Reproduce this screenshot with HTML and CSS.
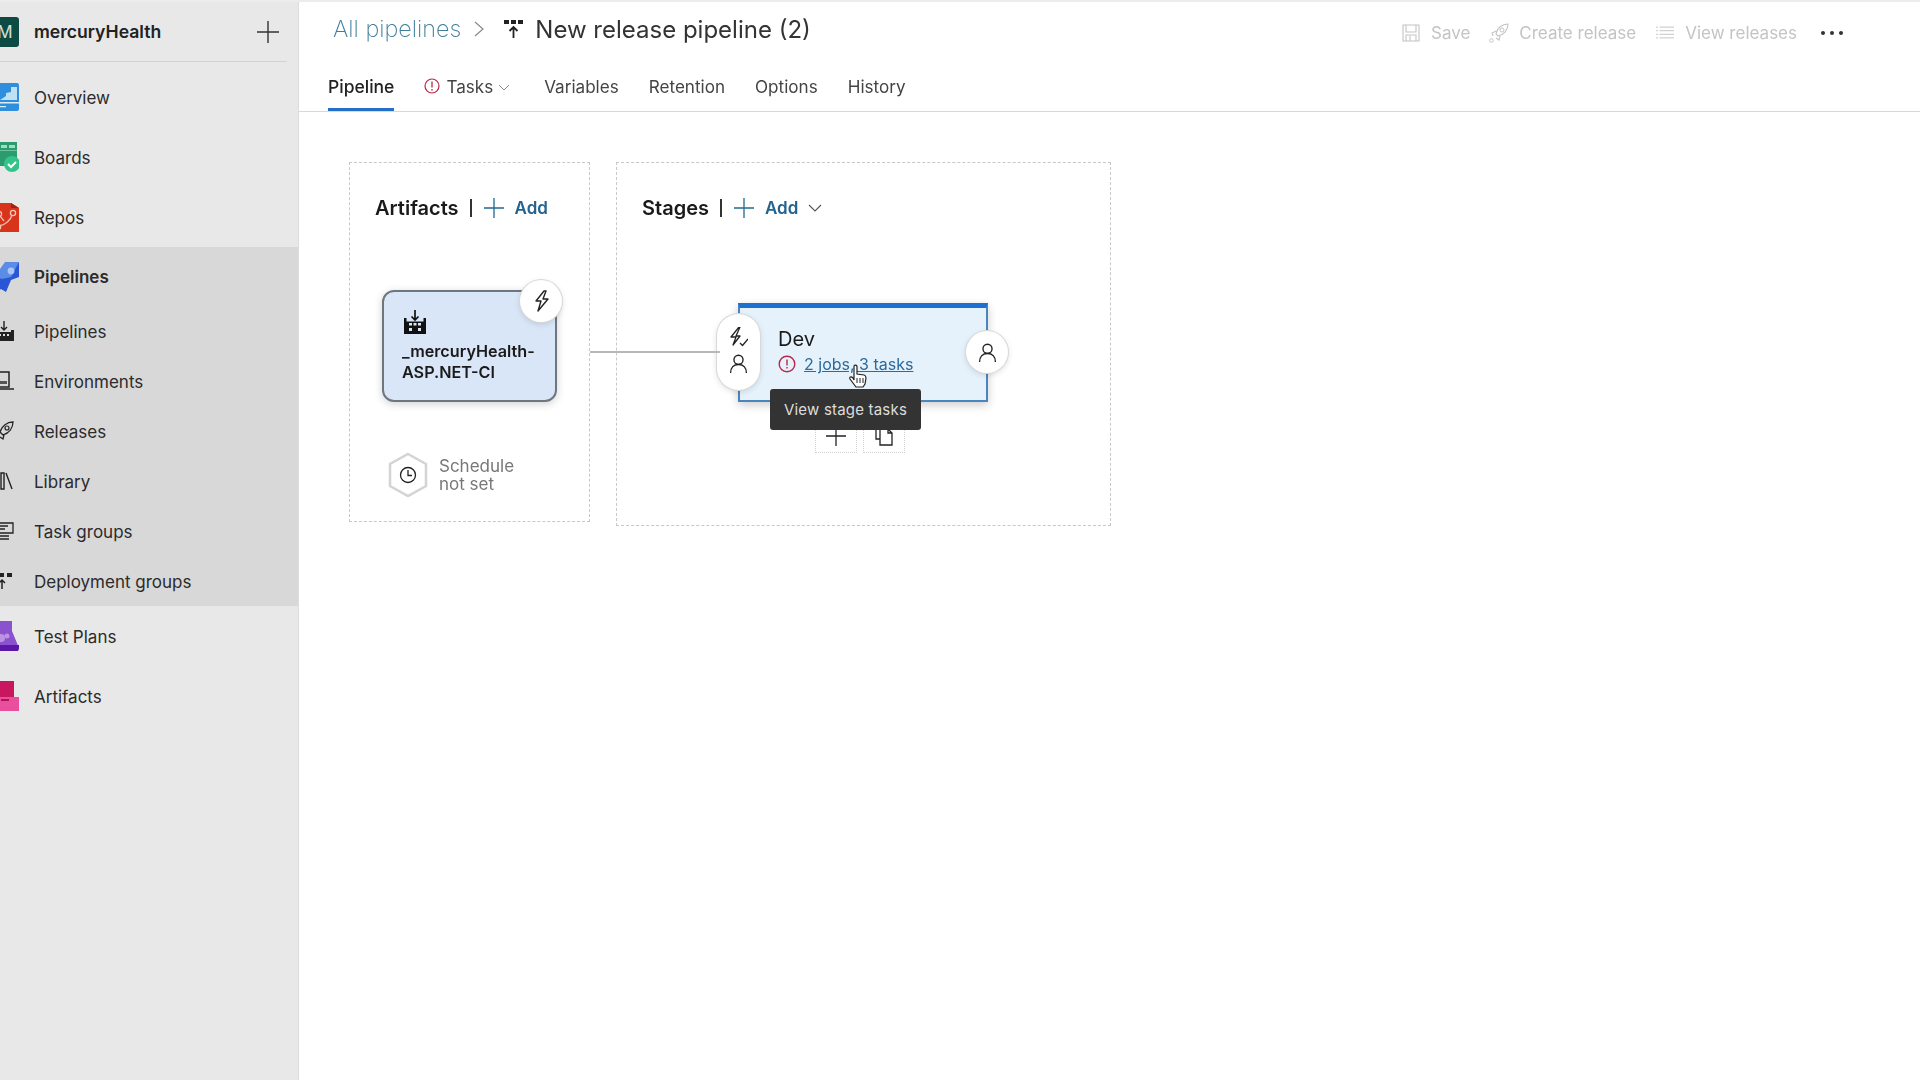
FILE: index.html
```html
<!DOCTYPE html>
<html lang="en">
<head>
<meta charset="utf-8">
<title>New release pipeline (2)</title>
<link rel="stylesheet" href="styles.css">
</head>
<body>
<div class="app">
  <aside class="sidebar">
    <div class="org">
      <span class="org-badge">M</span>
      <span class="org-name">mercuryHealth</span>
      <svg class="org-plus" viewBox="0 0 22 22"><path d="M11 0v22M0 11h22" stroke="#333" stroke-width="1.4" fill="none"/></svg>
    </div>
    <nav class="nav">
      <a class="nav-item">
        <svg class="hub-icon" viewBox="0 0 28 28"><rect width="28" height="28" rx="2" fill="#2f8fdc"/><path d="M9 17l6-4v-3l5-1V4h6v13z" fill="#bfe0f5"/><path d="M0 19h28v1.5H0zM0 23h15v1.2H0z" fill="#d9eefb"/></svg>
        <span>Overview</span>
      </a>
      <a class="nav-item">
        <svg class="hub-icon" viewBox="0 0 28 30"><path d="M0 0h26v24H0z" fill="#2c9c70"/><path d="M0 3h8v3H0zM10 3h6v3h-6zM18 3h6v3h-6z" fill="#a4dcc0"/><path d="M0 8h26v1H0z" fill="#6cc49b"/><circle cx="21" cy="22" r="8" fill="#34c48b"/><path d="M17 22l3 3 5-5" stroke="#fff" stroke-width="2" fill="none"/></svg>
        <span>Boards</span>
      </a>
      <a class="nav-item">
        <svg class="hub-icon" viewBox="0 0 28 30"><path d="M0 1h20l8 5v24H0z" fill="#d8341c"/><path d="M20 1l8 5h-8z" fill="#9f2411"/><path d="M8 24c6-1 12-6 13-11M9 14l4 5" stroke="#f3b7a8" stroke-width="1.4" fill="none"/><circle cx="22" cy="11" r="2.6" fill="none" stroke="#f6c8bc" stroke-width="1.3"/><circle cx="8" cy="12" r="2.6" fill="none" stroke="#f6c8bc" stroke-width="1.3"/><circle cx="7" cy="25" r="2.6" fill="none" stroke="#f6c8bc" stroke-width="1.3"/></svg>
        <span>Repos</span>
      </a>
      <div class="nav-group">
        <a class="nav-item nav-item-active">
          <svg class="hub-icon" viewBox="0 0 28 30"><path d="M28 0v15l-8 3-5 12-5-3-4 3-6-8 10-14z" fill="#2a56d6"/><path d="M28 0H14L4 14l7 3 9-2z" fill="#5b8de8"/><circle cx="20" cy="9" r="3.4" fill="#a9c6f5"/></svg>
          <span>Pipelines</span>
        </a>
        <a class="nav-sub">
          <svg class="sub-icon" viewBox="0 0 20 20"><path d="M10 0v9M7 6l3 3 3-3" stroke="#222" stroke-width="1.4" fill="none"/><path d="M0 9h3v2h14V9h3v11H0z" fill="#222"/><path d="M5 13h2v2H5zM9 13h2v2H9zM13 13h2v2h-2z" fill="#ddd"/></svg>
          <span>Pipelines</span>
        </a>
        <a class="nav-sub">
          <svg class="sub-icon" viewBox="0 0 20 20"><path d="M3 1h12v15H3zM0 18h20" stroke="#222" stroke-width="1.5" fill="none"/><path d="M5 10h8v3H5z" fill="#555"/></svg>
          <span>Environments</span>
        </a>
        <a class="nav-sub">
          <svg class="sub-icon" viewBox="0 0 20 20"><path d="M19 1c-6 0-11 4-13 10l3 3c6-2 10-7 10-13zM6 9l-4 2 1 3M10 14l-1 4-3-2" stroke="#222" stroke-width="1.3" fill="none"/><circle cx="13" cy="7" r="2" fill="none" stroke="#222" stroke-width="1.2"/></svg>
          <span>Releases</span>
        </a>
        <a class="nav-sub">
          <svg class="sub-icon" viewBox="0 0 20 20"><path d="M2 2h3v16H2zM7 2h3v16H7zM12 2l6 16" stroke="#222" stroke-width="1.4" fill="none"/></svg>
          <span>Library</span>
        </a>
        <a class="nav-sub">
          <svg class="sub-icon" viewBox="0 0 20 20"><path d="M3 2h16v10H3zM1 15h14M1 18h14M6 5h8M6 8h5" stroke="#222" stroke-width="1.3" fill="none"/></svg>
          <span>Task groups</span>
        </a>
        <a class="nav-sub">
          <svg class="sub-icon" viewBox="0 0 20 20"><path d="M0 2h4v4H0zM6 2h4v4H6zM13 2h5v4h-5z" fill="#222"/><path d="M8 18V9M5 12l3-3 3 3" stroke="#222" stroke-width="1.5" fill="none"/></svg>
          <span>Deployment groups</span>
        </a>
      </div>
      <a class="nav-item">
        <svg class="hub-icon" viewBox="0 0 28 30"><path d="M6 0h15v10l7 17-1 3H0v-20z" fill="#8a52cf"/><path d="M0 24h28v3l-1 3H0z" fill="#5a17a8"/><circle cx="10" cy="17" r="4" fill="#bb93e3"/><circle cx="16" cy="15" r="2.5" fill="#bb93e3"/></svg>
        <span>Test Plans</span>
      </a>
      <a class="nav-item">
        <svg class="hub-icon" viewBox="0 0 28 30"><path d="M2 0h21v17H2z" fill="#c8175f"/><path d="M0 16h28v14H0z" fill="#ea4f9d"/><path d="M10 18h8v2h-8z" fill="#a81456"/></svg>
        <span>Artifacts</span>
      </a>
    </nav>
  </aside>

  <main class="main">
    <header class="header">
      <div class="title-row">
        <a class="crumb">All pipelines</a>
        <svg class="crumb-sep" viewBox="0 0 10 16"><path d="M1 1l8 7-8 7" stroke="#8a8a8a" stroke-width="1.2" fill="none"/></svg>
        <svg class="title-icon" viewBox="0 0 20 20"><path d="M0 1h5v4H0zM7 1h5v4H7zM14 1h5v4h-5z" fill="#222"/><path d="M9.500 19V8M5.500 12l4-4 4 4" stroke="#222" stroke-width="1.8" fill="none"/></svg>
        <h1 class="title">New release pipeline (2)</h1>
        <div class="toolbar">
          <button class="tool tool-save">
            <svg class="tool-icon" viewBox="0 0 18 18"><path d="M1 1h16v16H1zM4 1v7h10V1M4 17v-6h10v6M8 12v5" stroke="#c4c4c4" stroke-width="1.1" fill="none"/></svg>Save
          </button>
          <button class="tool tool-create">
            <svg class="tool-icon tool-icon-wide" viewBox="0 0 20 20"><path d="M19 1c-6 0-11 4-12 10l2 2c6-1 10-6 10-12zM7 8l-4 2 1 3M11 13l-1 4-3-2" stroke="#c4c4c4" stroke-width="1.1" fill="none"/><circle cx="13" cy="7" r="2" fill="none" stroke="#c4c4c4"/><circle cx="2.500" cy="17.500" r="1.800" fill="none" stroke="#c4c4c4"/></svg>Create release
          </button>
          <button class="tool tool-view">
            <svg class="tool-icon" viewBox="0 0 20 14"><path d="M4 1h16M4 5h16M4 9h16M4 13h16M0 1h2M0 5h2M0 9h2M0 13h2" stroke="#c4c4c4" stroke-width="1.100" fill="none"/></svg>View releases
          </button>
          <span class="dots"><i></i><i></i><i></i></span>
        </div>
      </div>
      <div class="tabs">
        <a class="tab tab-active">Pipeline</a>
        <a class="tab tab-tasks">
          <svg class="tab-alert" viewBox="0 0 16 16"><circle cx="8" cy="8" r="7" fill="none" stroke="#b8274a" stroke-width="1.200"/><path d="M8 3.500v6M8 11v1.500" stroke="#b8274a" stroke-width="1.300"/></svg>
          Tasks
          <svg class="tab-chev" viewBox="0 0 12 7"><path d="M1 1l5 5 5-5" stroke="#888" stroke-width="1" fill="none"/></svg>
        </a>
        <a class="tab">Variables</a>
        <a class="tab">Retention</a>
        <a class="tab">Options</a>
        <a class="tab">History</a>
      </div>
    </header>

    <section class="canvas">
      <div class="panel panel-artifacts">
        <div class="panel-head">
          <span class="panel-title">Artifacts</span>
          <span class="panel-sep"></span>
          <svg class="add-plus" viewBox="0 0 20 20"><path d="M10 0v20M0 10h20" stroke="#1f6a8f" stroke-width="1.300" fill="none"/></svg>
          <span class="add-text">Add</span>
        </div>
        <div class="artifact-card">
          <svg class="artifact-icon" viewBox="0 0 22 24"><path d="M11 0v10M7.500 6.500L11 10l3.500-3.500" stroke="#111" stroke-width="1.700" fill="none"/><path d="M0 8h2.500v3.500h17V8H22v16H0z" fill="#111"/><path d="M5 13h3v2.500H5zM9.500 13h3v2.500h-3zM14 13h3v2.500h-3zM5 18h3v3H5zM14 18h3v3h-3z" fill="#dbe7f6"/></svg>
          <div class="artifact-name">_mercuryHealth-<br>ASP.NET-CI</div>
          <span class="round-badge artifact-trigger">
            <svg class="bolt" viewBox="0 0 18 22"><path d="M12 1L4 11h5L6 21l10-12h-5l3-8z" fill="none" stroke="#222" stroke-width="1.400" stroke-linejoin="round"/></svg>
          </span>
        </div>
        <div class="schedule">
          <svg class="hex" viewBox="0 0 42 46"><path d="M21 2l18 10v22L21 44 3 34V12z" fill="#fff" stroke="#d4d4d4" stroke-width="2.500"/><circle cx="21" cy="23" r="7.500" fill="none" stroke="#222" stroke-width="1.300"/><path d="M21 18v5.500h4" stroke="#222" stroke-width="1.300" fill="none"/></svg>
          <span class="schedule-text">Schedule<br>not set</span>
        </div>
      </div>

      <div class="panel panel-stages">
        <div class="panel-head">
          <span class="panel-title">Stages</span>
          <span class="panel-sep"></span>
          <svg class="add-plus" viewBox="0 0 20 20"><path d="M10 0v20M0 10h20" stroke="#1f6a8f" stroke-width="1.300" fill="none"/></svg>
          <span class="add-text">Add</span>
          <svg class="add-chev" viewBox="0 0 14 8"><path d="M1 1l6 6 6-6" stroke="#555" stroke-width="1.100" fill="none"/></svg>
        </div>
        <div class="stage-card">
          <div class="stage-name">Dev</div>
          <div class="stage-meta">
            <svg class="stage-alert" viewBox="0 0 18 18"><circle cx="9" cy="9" r="7.800" fill="none" stroke="#b8274a" stroke-width="1.400"/><path d="M9 4.500v6M9 12v1.500" stroke="#b8274a" stroke-width="1.400"/></svg>
            <a class="stage-link">2 jobs, 3 tasks</a>
          </div>
          <span class="stage-pill">
            <svg class="pill-bolt" viewBox="0 0 18 20"><path d="M9 0L1 10h5l-3 8 7-9H6l4-9zM10 16l2.500 2.500L18 12" fill="none" stroke="#222" stroke-width="1.300" stroke-linejoin="round"/></svg>
            <svg class="person" viewBox="0 0 18 18"><circle cx="9" cy="5.500" r="4.300" fill="none" stroke="#222" stroke-width="1.300"/><path d="M1.500 18c0-5 3-8 7.500-8s7.500 3 7.500 8" fill="none" stroke="#222" stroke-width="1.300"/></svg>
          </span>
          <span class="round-badge stage-post">
            <svg class="person" viewBox="0 0 18 18"><circle cx="9" cy="5.500" r="4.300" fill="none" stroke="#222" stroke-width="1.300"/><path d="M1.500 18c0-5 3-8 7.500-8s7.500 3 7.500 8" fill="none" stroke="#222" stroke-width="1.300"/></svg>
          </span>
          <svg class="hand" viewBox="0 0 18 24"><path d="M5 2c1-1.500 3-1 3 1v7l7 1c2 .5 2 2 2 3l-1 6-2 3H7l-6-8c-1-2 1-3 3-1l1 2z" fill="#fff" stroke="#222" stroke-width="1.200"/><path d="M8 14v5M11 14v5M14 14v5" stroke="#222" stroke-width="1"/></svg>
          <div class="tooltip">View stage tasks</div>
        </div>
        <span class="mini-btn mini-add">
          <svg class="mini-plus" viewBox="0 0 20 20"><path d="M10 0v20M0 10h20" stroke="#222" stroke-width="1.300" fill="none"/></svg>
        </span>
        <span class="mini-btn mini-copy">
          <svg class="mini-doc" viewBox="0 0 18 20"><path d="M1 0v13h4M5 3h8l4 4v12H5zM13 3v4h4" stroke="#222" stroke-width="1.300" fill="none"/></svg>
        </span>
      </div>
      <span class="connector"></span>
    </section>
  </main>
</div>
</body>
</html>
```
FILE: styles.css
```css
* { box-sizing: border-box; }
html, body { margin: 0; height: 100%; overflow: hidden; }
body { font-family: Inter, "Liberation Sans", sans-serif; color: #222; background: #fff; }
a { color: inherit; text-decoration: none; }
svg { display: block; flex: none; }

.app { display: flex; height: 1080px; width: 1920px; border-top: 2px solid #ececec; filter: blur(.35px); }

.sidebar { width: 299px; flex: none; background: #e8e8e8; border-right: 1px solid #dcdcdc; overflow: hidden; }
.org { height: 60px; margin-right: 11px; display: flex; align-items: center; border-bottom: 1px solid #d2d2d2; }
.org-badge { width: 28px; height: 30px; margin-left: -9px; margin-right: 15px; background: #0e4a44; color: #cfe3df; border-radius: 3px; font-size: 17px; display: flex; align-items: center; justify-content: center; flex: none; }
.org-name { font-size: 17.6px; font-weight: 600; color: #222; flex: 1; }
.org-plus { width: 22px; height: 22px; margin-right: 8px; }

.nav { padding-top: 5px; }
.nav-item { height: 60px; display: flex; align-items: center; font-size: 17px; color: #2b2b2b; }
.nav-item span, .nav-sub span { padding-top: 1px; }
.nav-item-active { font-weight: 600; height: 59px; }
.hub-icon { width: 28px; height: 30px; margin-left: -9px; margin-right: 15px; }
.nav-group { background: #d8d8d8; }
.nav-sub { height: 50px; display: flex; align-items: center; font-size: 17px; color: #2b2b2b; }
.sub-icon { width: 20px; height: 20px; margin-left: -6px; margin-right: 20px; }

.main { flex: 1; display: flex; flex-direction: column; min-width: 0; }
.header { height: 110px; border-bottom: 1px solid #d8d8d8; padding-left: 29px; flex: none; }
.title-row { height: 56px; display: flex; align-items: center; padding-left: 5px; }
.crumb { font-size: 23.4px; font-weight: 200; color: #3f7f9c; padding-bottom: 4px; }
.crumb-sep { width: 10px; height: 16px; margin-left: 13px; margin-top: -2px; }
.title-icon { width: 20px; height: 20px; margin-left: 20px; margin-top: -3px; }
.title { font-size: 24px; font-weight: 400; color: #333; margin: 0 0 0 11px; padding-bottom: 2px; }

.toolbar { margin-left: auto; display: flex; align-items: center; height: 100%; padding-top: 5px; padding-right: 77px; }
.tool { border: 0; background: none; font: inherit; font-size: 17px; color: #c4c4c4; display: flex; align-items: center; padding: 0; }
.tool-icon { width: 18px; height: 18px; margin-right: 11px; }
.tool-icon-wide { width: 20px; height: 20px; margin-right: 10px; }
.tool-view .tool-icon { height: 13px; }
.tool-create { margin-left: 19px; }
.tool-view { margin-left: 20px; }
.dots { margin-left: 24px; display: flex; gap: 5px; }
.dots i { width: 4px; height: 4px; border-radius: 50%; background: #333; }

.tabs { display: flex; gap: 30px; }
.tab { display: flex; align-items: center; font-size: 17.1px; color: #444; line-height: 20px; padding-top: 19px; padding-bottom: 11px; border-bottom: 3px solid transparent; height: 53px; }
.tab-active { color: #222; font-size: 17.5px; font-weight: 500; border-bottom-color: #2470c8; }
.tab-tasks { padding-right: 4px; }
.tab-alert { width: 16px; height: 16px; margin-right: 6px; margin-top: -3px; }
.tab-chev { width: 12px; height: 7px; margin-left: 5px; }

.canvas { position: relative; flex: 1; display: flex; align-items: flex-start; gap: 26px; padding: 50px 0 0 50px; }
.panel { position: relative; border: 1px dashed #c8c8c8; flex: none; }
.panel-artifacts { width: 241px; height: 360px; }
.panel-stages { width: 495px; height: 364px; }
.panel-head { display: flex; align-items: center; height: 24px; margin-top: 33px; padding-left: 25px; }
.panel-title { font-size: 20px; font-weight: 600; color: #1a1a1a; }
.panel-sep { width: 2px; height: 18px; background: #333; margin-left: 11px; margin-right: 12px; }
.add-plus { width: 20px; height: 20px; }
.add-text { font-size: 17px; font-weight: 600; color: #24628f; margin-left: 11px; }
.add-chev { width: 14px; height: 8px; margin-left: 10px; }

.connector { position: absolute; left: 291px; top: 239px; width: 130px; height: 2px; background: #b8b8b8; }

.artifact-card { position: absolute; left: 32px; top: 127px; width: 175px; height: 112px; background: #d9e6f7; border: 2px solid #6e7680; border-radius: 12px; box-shadow: 0 2px 8px rgba(0,0,0,.18); padding: 18px 0 0 18px; }
.artifact-icon { width: 22px; height: 24px; margin-bottom: 7px; margin-left: 2px; }
.artifact-name { font-size: 16.2px; font-weight: 600; line-height: 21px; color: #1a1a1a; }
.round-badge { position: absolute; width: 42px; height: 42px; border-radius: 50%; background: #fff; display: flex; align-items: center; justify-content: center; box-shadow: 0 0 0 1px #d8d8d8, 0 2px 6px rgba(0,0,0,.14); }
.artifact-trigger { left: 136px; top: -12px; }
.bolt { width: 18px; height: 22px; }

.schedule { position: absolute; left: 37px; top: 289px; display: flex; align-items: center; gap: 10px; }
.hex { width: 42px; height: 46px; }
.schedule-text { font-size: 17px; line-height: 18px; color: #777; }

.stage-card { position: absolute; left: 121px; top: 140px; width: 250px; height: 99px; background: #e6f2fb; border: 2px solid #4a86bd; border-top: 5px solid #1f6fd0; box-shadow: 0 3px 9px rgba(0,0,0,.2); padding: 18px 0 0 38px; }
.stage-name { font-size: 20px; line-height: 26px; color: #1a1a1a; }
.stage-meta { display: flex; align-items: center; height: 20px; margin-top: 2px; }
.stage-alert { width: 18px; height: 18px; margin-right: 8px; }
.stage-link { font-size: 16px; color: #2b6a9e; text-decoration: underline; }
.stage-pill { position: absolute; left: -23px; top: 6px; width: 43px; height: 76px; border-radius: 22px; background: #fff; box-shadow: 0 0 0 1px #d8d8d8, 0 2px 6px rgba(0,0,0,.14); display: flex; flex-direction: column; align-items: center; justify-content: center; gap: 7px; padding-bottom: 4px; }
.pill-bolt { width: 18px; height: 20px; }
.person { width: 19px; height: 19px; }
.stage-post { left: 226px; top: 23px; }
.hand { position: absolute; left: 109px; top: 56px; width: 18px; height: 24px; z-index: 3; }
.tooltip { position: absolute; left: 30px; top: 81px; width: 151px; height: 41px; background: #333; color: #ddd; border-radius: 3px; font-size: 15px; display: flex; align-items: center; justify-content: center; z-index: 2; letter-spacing: .2px; }

.mini-btn { position: absolute; top: 260px; width: 42px; height: 30px; border: 1px dotted #d0d0d0; display: flex; align-items: center; justify-content: center; }
.mini-add { left: 198px; }
.mini-copy { left: 246px; }
.mini-plus { width: 20px; height: 20px; margin-top: -4px; }
.mini-doc { width: 18px; height: 20px; margin-top: -4px; }
```
